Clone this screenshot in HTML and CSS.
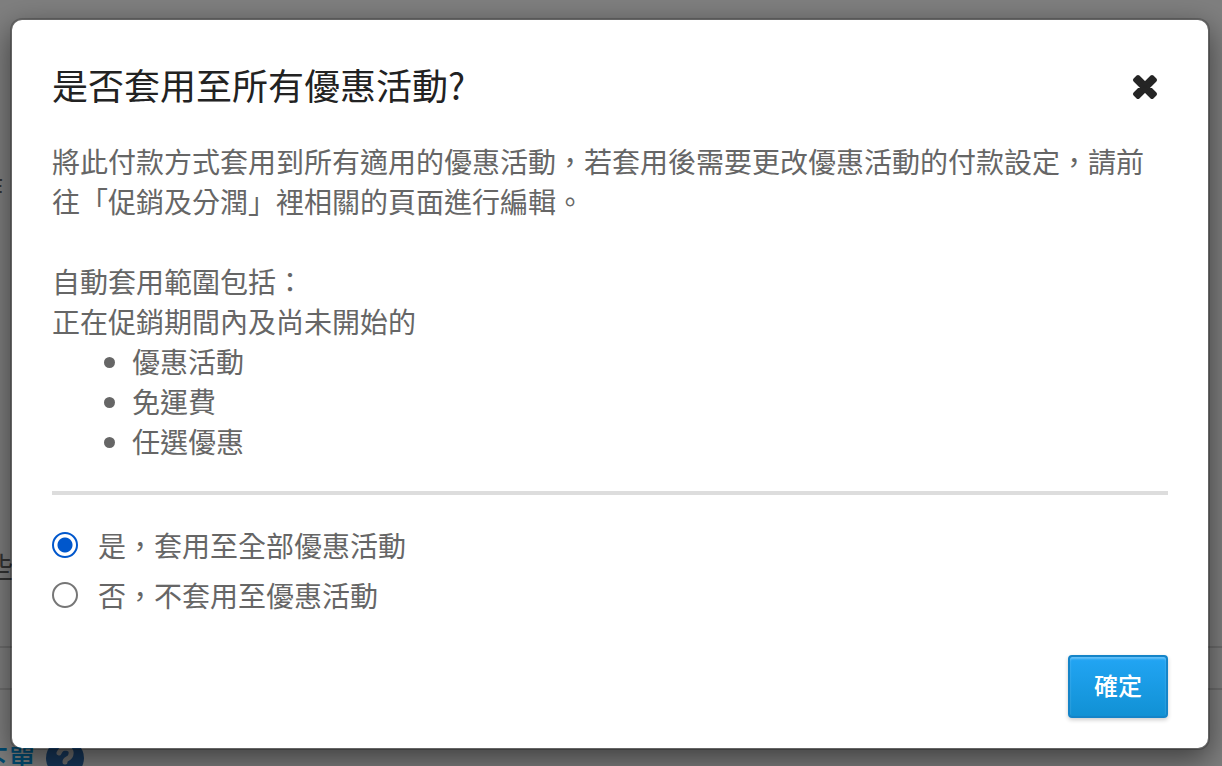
FILE: index.html
```html
<!DOCTYPE html>
<html lang="zh-Hant">
<head>
  <meta charset="UTF-8">
  <meta name="viewport" content="width=device-width, initial-scale=1.0">
  <title>是否套用至所有優惠活動?</title>
  <link rel="stylesheet" href="styles.css">
</head>
<body>
  <div class="page" aria-hidden="true">
    <p class="page-label">作</p>
    <p class="page-note">些</p>
    <div class="page-row"></div>
    <div class="page-link">
      <span>下單</span>
      <svg class="help-icon" viewBox="0 0 38 38">
        <circle cx="19" cy="19" r="19" fill="#2e6eb4"/>
        <path d="M13 14 Q15 9 20 9 Q26 10 25 15 Q25 18 21 20 Q19 21 19 23" fill="none" stroke="#dddddd" stroke-width="5" stroke-linecap="round"/>
        <circle cx="19" cy="30" r="3" fill="#dddddd"/>
      </svg>
    </div>
  </div>

  <div class="backdrop">
    <form class="modal" role="dialog" aria-labelledby="modal-title">
      <div class="modal-header">
        <h1 id="modal-title">是否套用至所有優惠活動?</h1>
        <button type="button" class="close" aria-label="關閉">
          <svg viewBox="0 0 26 26" width="26" height="26">
            <path d="M6 3 L13 10 L20 3 L23 6 L16 13 L23 20 L20 23 L13 16 L6 23 L3 20 L10 13 L3 6 Z" fill="#252525" stroke="#252525" stroke-width="4" stroke-linejoin="round"/>
          </svg>
        </button>
      </div>
      <div class="modal-body">
        <p>將此付款方式套用到所有適用的優惠活動，若套用後需要更改優惠活動的付款設定，請前往「促銷及分潤」裡相關的頁面進行編輯。</p>
        <p class="scope">自動套用範圍包括：<br>正在促銷期間內及尚未開始的</p>
        <ul>
          <li>優惠活動</li>
          <li>免運費</li>
          <li>任選優惠</li>
        </ul>
        <hr>
        <div class="options">
          <div class="option">
            <input type="radio" name="apply" id="apply-yes" checked>
            <label for="apply-yes">是，套用至全部優惠活動</label>
          </div>
          <div class="option">
            <input type="radio" name="apply" id="apply-no">
            <label for="apply-no">否，不套用至優惠活動</label>
          </div>
        </div>
      </div>
      <div class="modal-footer">
        <button type="button" class="confirm">確定</button>
      </div>
    </form>
  </div>
</body>
</html>
```
FILE: styles.css
```css
* {
  box-sizing: border-box;
}

body {
  margin: 0;
  font-family: "Noto Sans CJK TC", sans-serif;
  font-size: 28px;
  line-height: 40px;
  color: #666666;
}

p, h1, ul {
  margin: 0;
}

/* page under the dialog */
.page {
  position: fixed;
  inset: 0;
  overflow: hidden;
  background: #ffffff;
  padding-top: 166px;
}

.page-label, .page-note {
  color: #666666;
  margin-left: -25px;
}

.page-note {
  margin: 340px 0 0 -15px;
}

.page-row {
  height: 44px;
  margin-top: 60px;
  border-top: 2px solid #dddddd;
  border-bottom: 2px solid #dddddd;
}

.page-link {
  display: flex;
  align-items: center;
  gap: 10px;
  margin: 48px 0 0 -20px;
  font-weight: 500;
  color: #0099e6;
}

.help-icon {
  width: 38px;
  height: 38px;
}

.backdrop {
  position: fixed;
  inset: 0;
  overflow: auto;
  padding: 18px 12px 16px 10px;
  background: rgba(0, 0, 0, 0.5);
}

.modal {
  padding: 40px;
  padding-bottom: 30px;
  background: #ffffff;
  background-clip: padding-box;
  border: 2px solid rgba(0, 0, 0, 0.2);
  border-radius: 12px;
  box-shadow: 0 10px 30px rgba(0, 0, 0, 0.5);
}

.modal-header {
  display: flex;
  align-items: flex-end;
  justify-content: space-between;
  margin-bottom: 33px;
}

.modal-header h1 {
  font-size: 36px;
  font-weight: 400;
  line-height: 48px;
  color: #222222;
}

.close {
  margin: 0;
  padding: 8px 10px;
  border: 0;
  background: none;
  line-height: 0;
  cursor: pointer;
}

.scope {
  margin-top: 40px;
}

ul {
  padding-left: 80px;
}

hr {
  height: 4px;
  margin: 30px 0;
  border: 0;
  background: #dddddd;
}

.options {
  display: grid;
  gap: 10px;
}

.option {
  display: flex;
  align-items: center;
  gap: 20px;
}

.option input {
  appearance: none;
  width: 26px;
  height: 26px;
  margin: 0;
  border: 2px solid #767676;
  border-radius: 50%;
}

.option input:checked {
  border-color: #0057cc;
  background: radial-gradient(circle, #0057cc 7px, #ffffff 8px);
}

.modal-footer {
  display: flex;
  justify-content: flex-end;
  margin-top: 40px;
}

.confirm {
  padding: 8px 24px 12px;
  border: 2px solid #1484c8;
  border-radius: 4px;
  background: linear-gradient(#22a5f4, #1191d4);
  box-shadow: inset 0 2px 2px rgba(255, 255, 255, 0.3), 0 2px 4px rgba(0, 0, 0, 0.2);
  font-family: inherit;
  font-size: 24px;
  font-weight: 500;
  line-height: 39px;
  color: #ffffff;
  cursor: pointer;
}
```
